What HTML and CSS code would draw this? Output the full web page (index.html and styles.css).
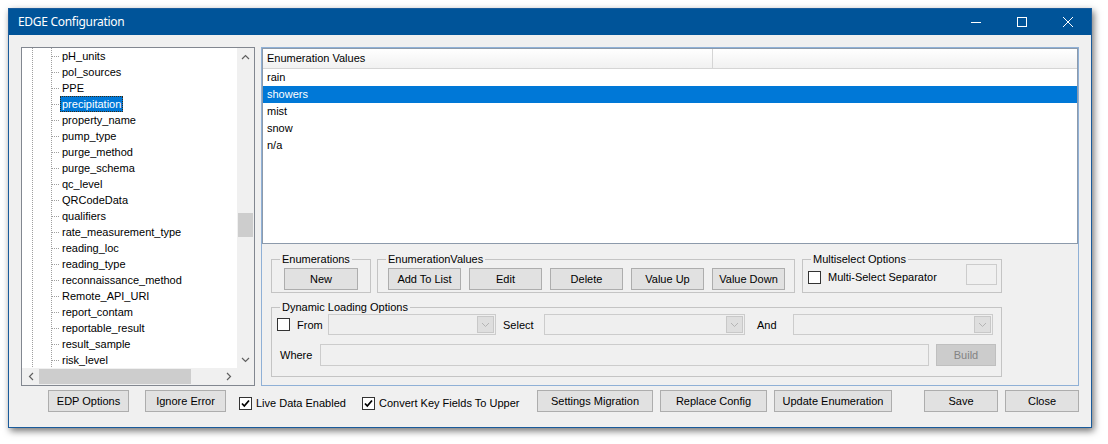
FILE: index.html
```html
<!DOCTYPE html>
<html>
<head>
<meta charset="utf-8">
<title>EDGE Configuration</title>
<link rel="stylesheet" href="styles.css">
</head>
<body>
<div class="desk">
  <div class="window">
    <div class="titlebar">
      <span class="title">EDGE Configuration</span>
      <div class="caption">
        <span class="capbtn"><svg width="10" height="10" viewBox="0 0 10 10"><path d="M0 5.5H10" stroke="#fff" stroke-width="1"/></svg></span>
        <span class="capbtn"><svg width="10" height="10" viewBox="0 0 10 10"><rect x="0.5" y="0.5" width="9" height="9" fill="none" stroke="#fff" stroke-width="1"/></svg></span>
        <span class="capbtn"><svg width="10" height="10" viewBox="0 0 10 10"><path d="M0 0L10 10M10 0L0 10" stroke="#fff" stroke-width="1"/></svg></span>
      </div>
    </div>
    <div class="client">
      <div class="main">
        <div class="tree">
          <div class="rows">
            <div class="row"><span class="item">pH_units</span></div>
            <div class="row"><span class="item">pol_sources</span></div>
            <div class="row"><span class="item">PPE</span></div>
            <div class="row"><span class="item sel">precipitation</span></div>
            <div class="row"><span class="item">property_name</span></div>
            <div class="row"><span class="item">pump_type</span></div>
            <div class="row"><span class="item">purge_method</span></div>
            <div class="row"><span class="item">purge_schema</span></div>
            <div class="row"><span class="item">qc_level</span></div>
            <div class="row"><span class="item">QRCodeData</span></div>
            <div class="row"><span class="item">qualifiers</span></div>
            <div class="row"><span class="item">rate_measurement_type</span></div>
            <div class="row"><span class="item">reading_loc</span></div>
            <div class="row"><span class="item">reading_type</span></div>
            <div class="row"><span class="item">reconnaissance_method</span></div>
            <div class="row"><span class="item">Remote_API_URI</span></div>
            <div class="row"><span class="item">report_contam</span></div>
            <div class="row"><span class="item">reportable_result</span></div>
            <div class="row"><span class="item">result_sample</span></div>
            <div class="row"><span class="item">risk_level</span></div>
          </div>
          <div class="vscroll">
            <span class="arrow"><svg width="9" height="6" viewBox="0 0 9 6"><path d="M1 5L4.5 1.5L8 5" fill="none" stroke="#606060" stroke-width="1.2"/></svg></span>
            <div class="vtrack"><div class="vthumb"></div></div>
            <span class="arrow"><svg width="9" height="6" viewBox="0 0 9 6"><path d="M1 1L4.5 4.5L8 1" fill="none" stroke="#606060" stroke-width="1.2"/></svg></span>
          </div>
          <div class="hscroll">
            <span class="arrow"><svg width="6" height="9" viewBox="0 0 6 9"><path d="M5 1L1.5 4.5L5 8" fill="none" stroke="#606060" stroke-width="1.2"/></svg></span>
            <div class="htrack"><div class="hthumb"></div></div>
            <span class="arrow"><svg width="6" height="9" viewBox="0 0 6 9"><path d="M1 1L4.5 4.5L1 8" fill="none" stroke="#606060" stroke-width="1.2"/></svg></span>
          </div>
          <div class="corner"></div>
        </div>

        <div class="panel">
          <div class="listview">
            <div class="lvhead">
              <div class="lvcol c1">Enumeration Values</div>
              <div class="lvcol c2"></div>
            </div>
            <div class="lvrow">rain</div>
            <div class="lvrow sel">showers</div>
            <div class="lvrow">mist</div>
            <div class="lvrow">snow</div>
            <div class="lvrow">n/a</div>
          </div>

          <div class="groups">
            <div class="grow">
              <div class="gbox g-enum">
                <span class="legend">Enumerations</span>
                <div class="gcontent btnrow-enum">
                  <span class="btn w74">New</span>
                </div>
              </div>
              <div class="gbox g-ev">
                <span class="legend">EnumerationValues</span>
                <div class="gcontent btnrow-ev">
                  <span class="btn w73">Add To List</span>
                  <span class="btn w73">Edit</span>
                  <span class="btn w73">Delete</span>
                  <span class="btn w73">Value Up</span>
                  <span class="btn w73">Value Down</span>
                </div>
              </div>
              <div class="gbox g-ms">
                <span class="legend">Multiselect Options</span>
                <div class="ms-row">
                  <span class="cb ms-cb"></span>
                  <span class="ms-label">Multi-Select Separator</span>
                  <span class="tbox ms-tb"></span>
                </div>
              </div>
            </div>
            <div class="gbox g-dyn">
              <span class="legend">Dynamic Loading Options</span>
              <div class="dyn-row1">
                <span class="cb"></span>
                <span class="dl l-from">From</span>
                <span class="combo w168"><span class="dd"><svg width="9" height="6" viewBox="0 0 9 6"><path d="M1 1L4.5 4.5L8 1" fill="none" stroke="#b4b4b4" stroke-width="1"/></svg></span></span>
                <span class="dl l-select">Select</span>
                <span class="combo w201"><span class="dd"><svg width="9" height="6" viewBox="0 0 9 6"><path d="M1 1L4.5 4.5L8 1" fill="none" stroke="#b4b4b4" stroke-width="1"/></svg></span></span>
                <span class="dl l-and">And</span>
                <span class="combo w200"><span class="dd"><svg width="9" height="6" viewBox="0 0 9 6"><path d="M1 1L4.5 4.5L8 1" fill="none" stroke="#b4b4b4" stroke-width="1"/></svg></span></span>
              </div>
              <div class="dyn-row2">
                <span class="dl l-where">Where</span>
                <span class="tbox where-tb"></span>
                <span class="btn disabled build">Build</span>
              </div>
            </div>
          </div>
        </div>
      </div>

      <div class="footer">
        <span class="btn f-edp">EDP Options</span>
        <span class="btn f-ign">Ignore Error</span>
        <span class="check f-live"><span class="cb checked"><svg width="11" height="11" viewBox="0 0 11 11"><path d="M2 5.5L4.3 8L9 2.5" fill="none" stroke="#000" stroke-width="1.8"/></svg></span><span class="cl">Live Data Enabled</span></span>
        <span class="check f-conv"><span class="cb checked"><svg width="11" height="11" viewBox="0 0 11 11"><path d="M2 5.5L4.3 8L9 2.5" fill="none" stroke="#000" stroke-width="1.8"/></svg></span><span class="cl">Convert Key Fields To Upper</span></span>
        <span class="btn f-set">Settings Migration</span>
        <span class="btn f-rep">Replace Config</span>
        <span class="btn f-upd">Update Enumeration</span>
        <span class="btn f-save">Save</span>
        <span class="btn f-close">Close</span>
      </div>
    </div>
  </div>
</div>
</body>
</html>
```

FILE: styles.css
```css
* { box-sizing: border-box; }
html, body { margin: 0; padding: 0; background: #ffffff; }
body {
  font-family: "Liberation Sans", Arial, sans-serif;
  font-size: 11px;
  color: #000;
}
.desk { padding: 8px; width: 1108px; height: 444px; }
.window {
  width: 1084px;
  height: 420px;
  border: 1px solid #1a5b9b;
  background: #f0f0f0;
  box-shadow: 2px 3px 7px rgba(0,0,0,0.55);
  display: flex;
  flex-direction: column;
}
.titlebar {
  height: 26px;
  flex: none;
  background: #005499;
  display: flex;
  align-items: center;
  color: #fff;
}
.title {
  font-family: "Noto Sans", "Open Sans", sans-serif;
  font-size: 12px;
  letter-spacing: -0.3px;
  padding-left: 9px;
  padding-bottom: 1px;
}
.caption { margin-left: auto; display: flex; height: 100%; }
.capbtn {
  width: 46px;
  height: 100%;
  display: flex;
  align-items: center;
  justify-content: center;
}
.capbtn svg { display: block; }

.client {
  flex: 1;
  padding: 12px 12px 0 12px;
  display: flex;
  flex-direction: column;
}
.main { display: flex; gap: 6px; height: 339px; flex: none; }

/* tree */
.tree {
  width: 234px;
  height: 339px;
  border: 1px solid #828790;
  background: #fff;
  display: grid;
  grid-template-columns: 1fr 17px;
  grid-template-rows: 1fr 17px;
}
.rows {
  overflow: hidden;
  background-image:
    linear-gradient(to bottom, #a0a0a0 50%, transparent 50%),
    linear-gradient(to bottom, #a0a0a0 50%, transparent 50%);
  background-size: 1px 2px, 1px 2px;
  background-repeat: repeat-y, repeat-y;
  background-position: 10px 0, 29px 0;
}
.row {
  height: 16px;
  display: flex;
  align-items: center;
  padding-left: 30px;
  white-space: nowrap;
}
.row::before {
  content: "";
  width: 8px;
  height: 1px;
  flex: none;
  background-image: linear-gradient(to right, #a0a0a0 50%, transparent 50%);
  background-size: 2px 1px;
}
.item {
  border: 1px solid transparent;
  padding: 0 1px;
  line-height: 14px;
  height: 16px;
}
.item.sel {
  background: #0078d7;
  color: #fff;
  border: 1px dotted #3a2a10;
}
.vscroll {
  background: #f0f0f0;
  display: flex;
  flex-direction: column;
}
.arrow {
  width: 17px;
  height: 17px;
  flex: none;
  display: flex;
  align-items: center;
  justify-content: center;
}
.arrow svg { display: block; }
.vtrack { flex: 1; }
.vthumb { margin: 148px 1px 0 1px; height: 24px; background: #cdcdcd; }
.hscroll {
  background: #f0f0f0;
  display: flex;
}
.htrack { flex: 1; padding: 1px 0; }
.hthumb { width: 152px; height: 15px; background: #cdcdcd; }
.corner { background: #f0f0f0; }

/* right panel */
.panel {
  width: 818px;
  height: 339px;
  border: 1px solid #8fb0d6;
  display: flex;
  flex-direction: column;
}
.listview {
  height: 196px;
  border: 1px solid #8c9aab;
  background: #fff;
  flex: none;
}
.lvhead {
  height: 20px;
  display: flex;
  background: linear-gradient(#ffffff, #f1f1f1);
  border-bottom: 1px solid #d5d5d5;
}
.lvcol { line-height: 19px; padding-left: 4px; }
.lvcol.c1 { width: 450px; border-right: 1px solid #d5d5d5; }
.lvcol.c2 { flex: 1; }
.lvrow { height: 17px; line-height: 17px; padding-left: 4px; }
.lvrow.sel { background: #0078d7; color: #fff; }

.groups { padding: 15px 0 0 9px; }
.grow { display: flex; }
.gbox {
  border: 1px solid #c4c4c4;
  height: 34px;
}
.legend {
  display: block;
  width: fit-content;
  margin: -7px 0 0 8px;
  padding: 0 2px;
  background: #f0f0f0;
  line-height: 13px;
  height: 13px;
  white-space: nowrap;
}
.g-enum { width: 100px; margin-right: 6px; }
.g-ev { width: 418px; margin-right: 7px; }
.g-ms { width: 200px; }
.gcontent { display: flex; margin-top: 2px; }
.btnrow-enum { padding-left: 12px; }
.btnrow-ev { padding-left: 10px; gap: 8px; }

.btn {
  display: block;
  height: 22px;
  line-height: 20px;
  text-align: center;
  background: #e1e1e1;
  border: 1px solid #adadad;
  white-space: nowrap;
  flex: none;
}
.btn.disabled { background: #cccccc; border-color: #bfbfbf; color: #838383; }
.w74 { width: 74px; }
.w73 { width: 73px; }

.cb {
  width: 13px;
  height: 13px;
  border: 1px solid #333333;
  background: #fff;
  flex: none;
  display: flex;
  align-items: center;
  justify-content: center;
}
.cb svg { display: block; }

.ms-row { display: flex; align-items: flex-start; margin-top: -2px; padding-left: 5px; }
.ms-cb { margin-top: 7px; }
.ms-label { margin-left: 7px; margin-top: 7px; line-height: 13px; }
.tbox { background: #f0f0f0; border: 1px solid #cccccc; display: block; flex: none; }
.ms-tb { width: 31px; height: 21px; margin-left: auto; margin-right: 4px; }

.g-dyn { width: 731px; height: 70px; margin-top: 14px; }
.dyn-row1 { display: flex; align-items: center; height: 21px; padding-left: 5px; }
.dl { display: block; flex: none; white-space: nowrap; }
.l-from { margin-left: 7px; width: 31px; }
.l-select { margin-left: 7px; width: 41px; }
.l-and { margin-left: 12px; width: 36px; }
.combo {
  display: flex;
  justify-content: flex-end;
  height: 21px;
  background: #efefef;
  border: 1px solid #cccccc;
  padding: 1px;
  flex: none;
}
.dd {
  width: 17px;
  height: 17px;
  background: #dedede;
  border: 1px solid #c8c8c8;
  display: flex;
  align-items: center;
  justify-content: center;
}
.w168 { width: 168px; }
.w201 { width: 201px; }
.w200 { width: 200px; }
.dyn-row2 { display: flex; align-items: center; margin-top: 9px; padding-left: 8px; height: 22px; }
.l-where { width: 40px; }
.where-tb { width: 609px; height: 22px; }
.build { width: 60px; margin-left: 7px; }

/* footer */
.footer { display: flex; align-items: flex-start; margin-top: 4px; height: 22px; }
.f-edp { width: 81px; margin-left: 27px; }
.f-ign { width: 81px; margin-left: 16px; }
.check { display: flex; align-items: center; flex: none; margin-top: 7px; height: 13px; }
.check .cl { margin-left: 4px; white-space: nowrap; line-height: 13px; }
.f-live { width: 123px; margin-left: 13px; }
.f-conv { width: 175px; }
.f-set { width: 116px; }
.f-rep { width: 107px; margin-left: 7px; }
.f-upd { width: 118px; margin-left: 7px; }
.f-save { width: 74px; margin-left: 32px; }
.f-close { width: 74px; margin-left: 7px; }
```
